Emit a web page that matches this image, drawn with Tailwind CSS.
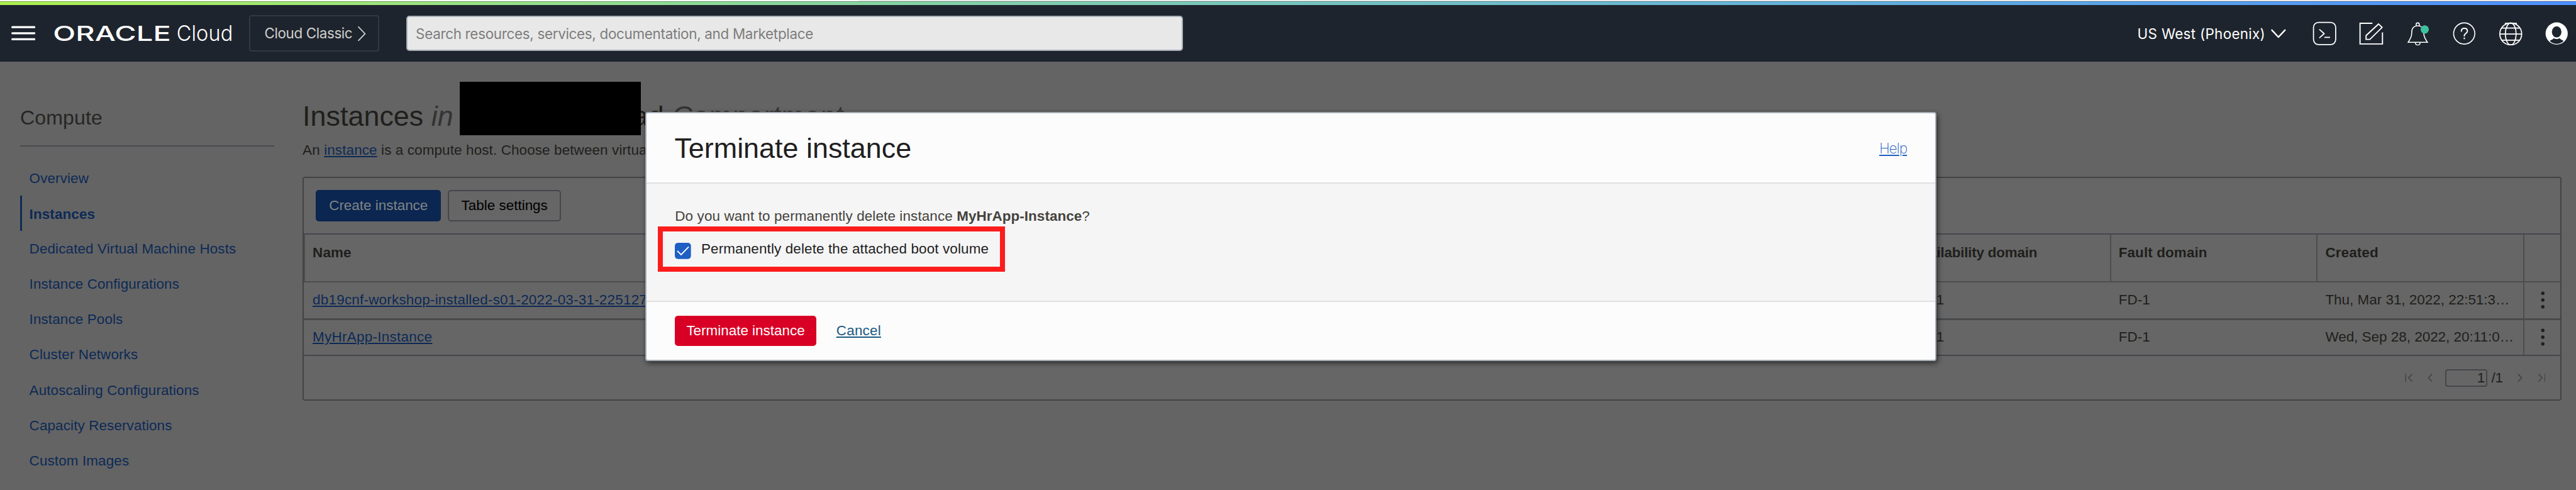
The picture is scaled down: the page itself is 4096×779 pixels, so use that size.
<!DOCTYPE html>
<html lang="en" class="text-[25.66px]">
<head>
<meta charset="utf-8">
<title>Instances - Oracle Cloud</title>
<script src="https://cdn.jsdelivr.net/npm/@tailwindcss/browser@4"></script>
</head>
<body class="relative h-[779px] w-[4096px] overflow-hidden bg-[#646464] font-['Liberation_Sans',Arial,sans-serif] text-sm/5 tracking-[0.12px] text-[#1f1f1c]">

<!-- Accent strip -->
<div class="flex h-0.25">
  <div class="w-213 bg-white"></div>
  <div class="grow bg-[#ebebeb]"></div>
</div>
<div class="h-1 bg-linear-to-r from-[#adf04f] to-[#4f8fff]">
  <div class="h-px bg-black/30"></div>
</div>

<!-- Console header -->
<header class="flex h-14 items-center bg-[#1e242d]">
  <svg class="ml-2.75 h-4 w-6 shrink-0" viewBox="0 0 48 32" fill="none" stroke="#fff" stroke-width="4" stroke-linecap="round"><path d="M2 4h44M2 16h44M2 28h44"/></svg>
  <svg class="ml-4.5 h-7 w-45 shrink-0 overflow-visible" viewBox="0 0 360 56" fill="#fff" aria-label="Oracle Cloud">
    <text x="-1" y="44" font-family="Inter, sans-serif" font-weight="550" font-size="41" textLength="234" lengthAdjust="spacingAndGlyphs">ORACLE</text>
    <text x="244" y="44" font-family="Inter, sans-serif" font-weight="300" font-size="43" textLength="112" lengthAdjust="spacingAndGlyphs">Cloud</text>
  </svg>
  <button class="ml-3.5 flex h-9 w-32.25 shrink-0 items-center rounded-[4px] border-2 border-[#333741] pl-3.5 font-['Inter',sans-serif] tracking-[-0.4px] text-[#cfcfcd]">
    <span>Cloud Classic</span>
    <svg class="ml-1.25 h-4 w-2.25" viewBox="0 0 18 32" fill="none" stroke="#cfcfcd" stroke-width="2.2"><path d="M2 3l13.500 14L2 31"/></svg>
  </button>
  <div class="ml-6.75 flex h-8.75 w-192.5 shrink-0 items-center rounded-[5px] border-2 border-[#a6aeb8] bg-[#e8e8e8] pl-2 pt-0.25 font-['Inter',sans-serif] tracking-[-0.32px] text-[#7d7d7d]">Search resources, services, documentation, and Marketplace</div>
  <div class="ml-auto flex items-center pr-1.75">
    <span class="pt-0.25 font-['Inter',sans-serif] tracking-[0.3px] text-white">US West (Phoenix)</span>
    <svg class="ml-1.25 h-3 w-4" viewBox="0 0 32 24" fill="none" stroke="#fff" stroke-width="3" stroke-linecap="round" stroke-linejoin="round"><path d="M3 6l13 14L29 6"/></svg>
    <div class="ml-6.5 flex gap-5.5">
      <svg class="size-6" viewBox="0 0 48 48" fill="none" stroke="#fff" stroke-width="2.200" stroke-linecap="round" stroke-linejoin="round"><rect x="2" y="2" width="44" height="44" rx="10"/><path d="M14.200 16.300l9 8-9 8M24.500 31.700h9.500"/></svg>
      <svg class="size-6" viewBox="0 0 48 48" fill="none" stroke="#fff" stroke-width="2.400"><path d="M26.500 3.700H2v41h44.500v-23"/><path d="M38.700 5.200l7 6.800-24.200 23.700H14V28z"/></svg>
      <svg class="size-6" viewBox="0 0 48 48" fill="none" stroke="#fff" stroke-width="2"><path d="M5.200 41.500C11.500 31 12.300 28 12.300 21c0-8 4.700-12.300 11.800-12.300S36 13 36 21c0 7 .8 10 7.300 20.500z"/><path d="M21 9V6a3.100 3.100 0 016.200 0v3M19.400 42.500c.3 6 9.100 6 9.400 0"/><circle cx="38" cy="16" r="8.200" fill="#3dc2a0" stroke="none"/></svg>
      <svg class="size-6" viewBox="0 0 48 48" fill="none" stroke="#fff" stroke-width="2" stroke-linecap="round"><circle cx="24" cy="24" r="21"/><path d="M18.300 19.500c0-3.500 2.500-5.700 6-5.700s6 2.200 6 5.500c0 4.500-6.200 4.500-6.200 9.700" stroke-width="2.400"/><circle cx="24.100" cy="33.700" r="1.100" fill="#fff" stroke-width="1"/></svg>
      <svg class="size-6" viewBox="0 0 48 48" fill="none" stroke="#fff" stroke-width="2.200"><circle cx="24" cy="25" r="21.700"/><ellipse cx="24" cy="25" rx="10.700" ry="21.700"/><path d="M5.500 13.300h37M2.500 25h43M5.500 37.200h37M12.300 4h24"/></svg>
      <svg class="size-6" viewBox="0 0 48 48"><circle cx="24" cy="24" r="22" fill="#fff"/><ellipse cx="24" cy="20.800" rx="9.500" ry="11" fill="#1e242d"/><path d="M10.500 39c3-3 6.300-2.300 7.500-5.800 3.500 2.500 8.500 2.500 12 0 1.200 3.500 4.500 2.800 7.500 5.800-3.500 3.600-8.500 5.600-13.500 5.600s-10-2-13.500-5.600z" fill="#1e242d"/></svg>
    </div>
  </div>
</header>

<div class="flex">
  <!-- Service navigation -->
  <aside class="ml-5 w-63 shrink-0 pt-11">
    <h3 class="h-10 border-b-2 border-[#4a494f] text-[1.25rem]/6 text-[#262624]">Compute</h3>
    <nav class="mt-3.5 flex flex-col text-[#0d2a56] *:flex *:h-8.75 *:items-center *:border-l-[3px] *:border-transparent *:pl-[11.5px] *:pt-0.25">
      <a>Overview</a>
      <a class="border-[#0d2a56]! pt-0.5! font-bold">Instances</a>
      <a>Dedicated Virtual Machine Hosts</a>
      <a>Instance Configurations</a>
      <a>Instance Pools</a>
      <a>Cluster Networks</a>
      <a>Autoscaling Configurations</a>
      <a>Capacity Reservations</a>
      <a>Custom Images</a>
    </nav>
  </aside>

  <!-- Instance list -->
  <main class="relative ml-7 w-560 shrink-0 pt-9.5">
    <h1 class="flex h-8 gap-[12.5px] text-[1.75rem]/8 whitespace-nowrap tracking-normal">
      <span>Instances</span>
      <em class="text-[#333]">in</em>
      <span class="pl-42.5">ad</span>
      <em class="text-[#333]">Compartment</em>
    </h1>
    <div class="absolute top-5 left-[249.500px] h-13.25 w-45 bg-black"></div>
    <p class="mt-2 whitespace-nowrap">An <a class="text-[#0d2a56] underline decoration-[1.5px] underline-offset-[2px]">instance</a> is a compute host. Choose between virtual</p>

    <section class="mt-4 h-55.5 rounded-[4px] border-2 border-[#434343] bg-[#666]">
      <div class="flex h-13.75 gap-1.75 pt-3 pl-3">
        <button class="h-7.75 w-31 rounded-[5px] bg-[#0b2650] tracking-normal text-[#808487]">Create instance</button>
        <button class="h-7.75 w-28 rounded-[5px] border-2 border-[#46454b] tracking-normal text-black">Table settings</button>
      </div>

      <div class="flex h-12.25 border-y-2 border-t-[#46454b] border-b-[#4d4d4d] font-bold *:border-l-2 *:border-[#4d4d4d] *:pt-2 *:pl-[12px]">
        <div class="grow">Name</div>
        <div class="w-51.25 shrink-0 overflow-hidden tracking-[-0.22px] whitespace-nowrap">Availability domain</div>
        <div class="w-51.25 shrink-0">Fault domain</div>
        <div class="w-51.25 shrink-0">Created</div>
        <div class="w-9.25 shrink-0"></div>
      </div>

      <div class="flex h-9.25 border-b-[3px] border-[#484a4c] *:border-l-2 *:border-transparent *:pt-1.75 *:pl-[12px]">
        <div class="grow"><a class="tracking-[0.22px] text-[#0d2a56] underline decoration-[1.5px] underline-offset-[2px]">db19cnf-workshop-installed-s01-2022-03-31-225127</a></div>
        <div class="w-51.25 shrink-0">AD-1</div>
        <div class="w-51.25 shrink-0">FD-1</div>
        <div class="w-51.25 shrink-0 whitespace-nowrap tracking-normal">Thu, Mar 31, 2022, 22:51:3…</div>
        <div class="flex w-9.25 shrink-0 justify-center border-[#4d4d4d]! pt-0! pl-0!">
          <svg class="mt-1.75 h-5 w-1" viewBox="0 0 8 40" fill="#1f1f1c"><circle cx="4" cy="6.500" r="3.400"/><circle cx="4" cy="20" r="3.400"/><circle cx="4" cy="33.500" r="3.400"/></svg>
        </div>
      </div>
      <div class="flex h-9 border-b-2 border-[#46454b] *:border-l-2 *:border-transparent *:pt-1.75 *:pl-[12px]">
        <div class="grow"><a class="tracking-[0.28px] text-[#0d2a56] underline decoration-[1.5px] underline-offset-[2px]">MyHrApp-Instance</a></div>
        <div class="w-51.25 shrink-0">AD-1</div>
        <div class="w-51.25 shrink-0">FD-1</div>
        <div class="w-51.25 shrink-0 whitespace-nowrap tracking-normal">Wed, Sep 28, 2022, 20:11:0…</div>
        <div class="flex w-9.25 shrink-0 justify-center border-[#4d4d4d]! pt-0! pl-0!">
          <svg class="mt-1.75 h-5 w-1" viewBox="0 0 8 40" fill="#1f1f1c"><circle cx="4" cy="6.500" r="3.400"/><circle cx="4" cy="20" r="3.400"/><circle cx="4" cy="33.500" r="3.400"/></svg>
        </div>
      </div>

      <div class="flex h-10.75 items-center justify-end pr-3.75">
        <svg class="h-2.5 w-2" viewBox="0 0 16 20" fill="none" stroke="#454545" stroke-width="2"><path d="M1.500 1.500v16M14.500 2L7 9.500l7.500 7.500"/></svg>
        <svg class="ml-3.75 h-2.5 w-1.25" viewBox="0 0 10 20" fill="none" stroke="#454545" stroke-width="2"><path d="M9 2L1.500 9.500 9 17"/></svg>
        <div class="ml-3 flex h-4.5 w-10.5 items-center justify-end rounded-[4px] border-2 border-[#46454b] pr-0.25">1</div>
        <span class="ml-1 tracking-normal">/1</span>
        <svg class="ml-3.5 h-2.5 w-1.25" viewBox="0 0 10 20" fill="none" stroke="#454545" stroke-width="2"><path d="M1 2l7.500 7.500L1 17"/></svg>
        <svg class="ml-3.75 h-2.5 w-2" viewBox="0 0 16 20" fill="none" stroke="#454545" stroke-width="2"><path d="M14.500 1.500v16M1.500 2L9 9.500 1.500 17"/></svg>
      </div>
    </section>
  </main>
</div>

<!-- Terminate dialog -->
<div role="dialog" class="absolute top-27.75 left-160 flex h-61.75 w-320 flex-col overflow-hidden rounded-[4px] border-2 border-[#a6aeb8] bg-[#fcfcfc] shadow-[2px_3px_8px_rgba(0,0,0,0.6)]">
  <div class="flex h-17.5 shrink-0 items-center justify-between border-b-2 border-[#e1e1e1] pr-7 pl-[44px]">
    <h2 class="pt-0.25 text-[1.75rem]/8 tracking-normal text-[#1f1f1f]">Terminate instance</h2>
    <a class="pt-0.25 font-['Inter',sans-serif] font-extralight tracking-[-0.9px] text-[#1f5fc4] underline decoration-[1.5px] underline-offset-[2px]">Help</a>
  </div>
  <div class="h-29.25 shrink-0 border-b-2 border-[#e1e1e1] bg-[#f5f5f5] pt-5.5">
    <p class="h-5 pl-7 text-[#45433e]">Do you want to permanently delete instance <b class="tracking-[0.05px]">MyHrApp-Instance</b>?</p>
    <label class="ml-2.75 flex h-11.25 w-86 items-center border-8 border-[#fb1d1d] pl-3 text-[#1f1f1f]">
      <svg class="mt-1 size-4 shrink-0" viewBox="0 0 32 32"><rect width="32" height="32" rx="6" fill="#1f5fc4"/><path d="M5 16l7.500 7.500L27.500 8" fill="none" stroke="#fff" stroke-width="2.400"/></svg>
      <span class="ml-2.5 pt-0.25 tracking-[0.13px]">Permanently delete the attached boot volume</span>
    </label>
  </div>
  <div class="flex grow items-center pl-7">
    <button class="h-7.5 w-35 rounded-[5px] bg-[#d90025] tracking-normal text-white">Terminate instance</button>
    <a class="ml-5 tracking-[0.2px] text-[#1b5a80] underline decoration-[1.5px] underline-offset-[2px]">Cancel</a>
  </div>
</div>
</body>
</html>
